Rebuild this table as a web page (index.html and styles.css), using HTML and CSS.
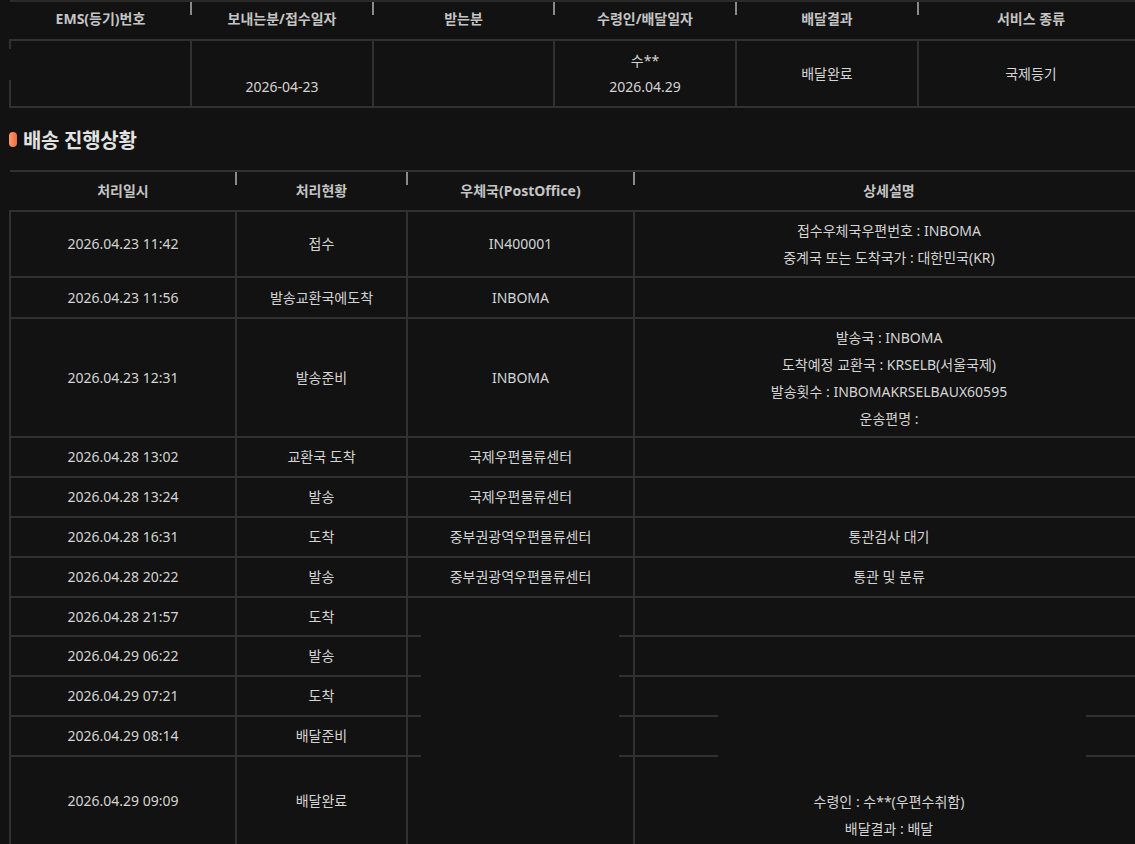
FILE: index.html
```html
<!DOCTYPE html>
<html lang="ko">
<head>
<meta charset="utf-8">
<title>배송 조회</title>
<link rel="stylesheet" href="styles.css">
</head>
<body>
<div class="page">
  <table class="grid summary">
    <colgroup>
      <col class="c181"><col class="c182"><col class="c181"><col class="c182"><col class="c182"><col class="c226">
    </colgroup>
    <thead>
      <tr class="h39">
        <th>EMS(등기)번호</th>
        <th>보내는분/접수일자</th>
        <th>받는분</th>
        <th>수령인/배달일자</th>
        <th>배달결과</th>
        <th>서비스 종류</th>
      </tr>
    </thead>
    <tbody>
      <tr class="h67">
        <td></td>
        <td><span class="blank">&nbsp;</span><br>2026-04-23</td>
        <td></td>
        <td>수**<br>2026.04.29</td>
        <td>배달완료</td>
        <td>국제등기</td>
      </tr>
    </tbody>
  </table>

  <h2 class="section-title"><span class="pill"></span>배송 진행상황</h2>

  <table class="grid progress">
    <colgroup>
      <col class="c226"><col class="c171"><col class="c227"><col class="c510">
    </colgroup>
    <thead>
      <tr class="h40">
        <th>처리일시</th>
        <th>처리현황</th>
        <th>우체국(PostOffice)</th>
        <th>상세설명</th>
      </tr>
    </thead>
    <tbody>
      <tr class="h66">
        <td>2026.04.23 11:42</td><td>접수</td><td>IN400001</td>
        <td class="desc">접수우체국우편번호 : INBOMA<br>중계국 또는 도착국가 : 대한민국(KR)</td>
      </tr>
      <tr class="h41">
        <td>2026.04.23 11:56</td><td>발송교환국에도착</td><td>INBOMA</td><td></td>
      </tr>
      <tr class="h119">
        <td>2026.04.23 12:31</td><td>발송준비</td><td>INBOMA</td>
        <td class="desc">발송국 : INBOMA<br>도착예정 교환국 : KRSELB(서울국제)<br>발송횟수 : INBOMAKRSELBAUX60595<br>운송편명 :</td>
      </tr>
      <tr class="h40"><td>2026.04.28 13:02</td><td>교환국 도착</td><td>국제우편물류센터</td><td></td></tr>
      <tr class="h40"><td>2026.04.28 13:24</td><td>발송</td><td>국제우편물류센터</td><td></td></tr>
      <tr class="h40"><td>2026.04.28 16:31</td><td>도착</td><td>중부권광역우편물류센터</td><td>통관검사 대기</td></tr>
      <tr class="h40"><td>2026.04.28 20:22</td><td>발송</td><td>중부권광역우편물류센터</td><td>통관 및 분류</td></tr>
      <tr class="h39"><td>2026.04.28 21:57</td><td>도착</td><td></td><td></td></tr>
      <tr class="h40"><td>2026.04.29 06:22</td><td>발송</td><td></td><td></td></tr>
      <tr class="h40"><td>2026.04.29 07:21</td><td>도착</td><td></td><td></td></tr>
      <tr class="h40"><td>2026.04.29 08:14</td><td>배달준비</td><td></td><td></td></tr>
      <tr class="h90">
        <td>2026.04.29 09:09</td><td>배달완료</td><td></td>
        <td class="desc"><span class="blank">&nbsp;</span><br>수령인 : 수**(우편수취함)<br>배달결과 : 배달</td>
      </tr>
    </tbody>
  </table>

  <div class="mask mask-a"></div>
  <div class="mask mask-b"></div>
  <div class="mask mask-c"></div>
</div>
</body>
</html>
```

FILE: styles.css
```css
html, body {
  margin: 0;
  padding: 0;
  background: #121212;
  overflow: hidden;
}

body {
  font-family: "Noto Sans", "Noto Sans CJK KR", sans-serif;
  font-size: 14px;
  color: #d4d4d4;
}

.page {
  position: relative;
  padding-left: 9px;
  width: 1140px;
}

.grid {
  border-collapse: collapse;
  table-layout: fixed;
  width: 1134px;
}

.grid th,
.grid td {
  border: 2px solid #313131;
  padding: 0;
  text-align: center;
  vertical-align: middle;
  line-height: 26px;
}

.grid th {
  position: relative;
  font-weight: 700;
  color: #c4c4c4;
  border-left: none;
  border-right: none;
}

.summary th {
  border-top-color: #2a2a2a;
  padding-bottom: 3px;
}

.grid th + th::before {
  content: "";
  position: absolute;
  left: -1px;
  top: 0;
  width: 2px;
  height: 13px;
  background: #8a8a8a;
}

.progress .desc {
  line-height: 27px;
}

.c181 { width: 181px; }
.c182 { width: 182px; }
.c226 { width: 226px; }
.c171 { width: 171px; }
.c227 { width: 227px; }
.c510 { width: 510px; }

.h39 { height: 39px; }
.h40 { height: 40px; }
.h41 { height: 41px; }
.h66 { height: 66px; }
.h67 { height: 67px; }
.h90 { height: 90px; }
.h119 { height: 119px; }

.section-title {
  display: flex;
  align-items: center;
  gap: 6px;
  margin: 0;
  height: 62px;
  font-size: 20px;
  font-weight: 700;
  color: #e2e2e2;
  letter-spacing: -0.3px;
}

.pill {
  width: 8px;
  height: 15px;
  border-radius: 4px;
  background: linear-gradient(90deg, #ff9a6e, #f06a3c);
}

.mask {
  position: absolute;
  background: #121212;
}

.mask-a { left: 5px; top: 49px; width: 10px; height: 31px; }
.mask-b { left: 421px; top: 598px; width: 198px; height: 260px; }
.mask-c { left: 718px; top: 700px; width: 368px; height: 70px; }
```
